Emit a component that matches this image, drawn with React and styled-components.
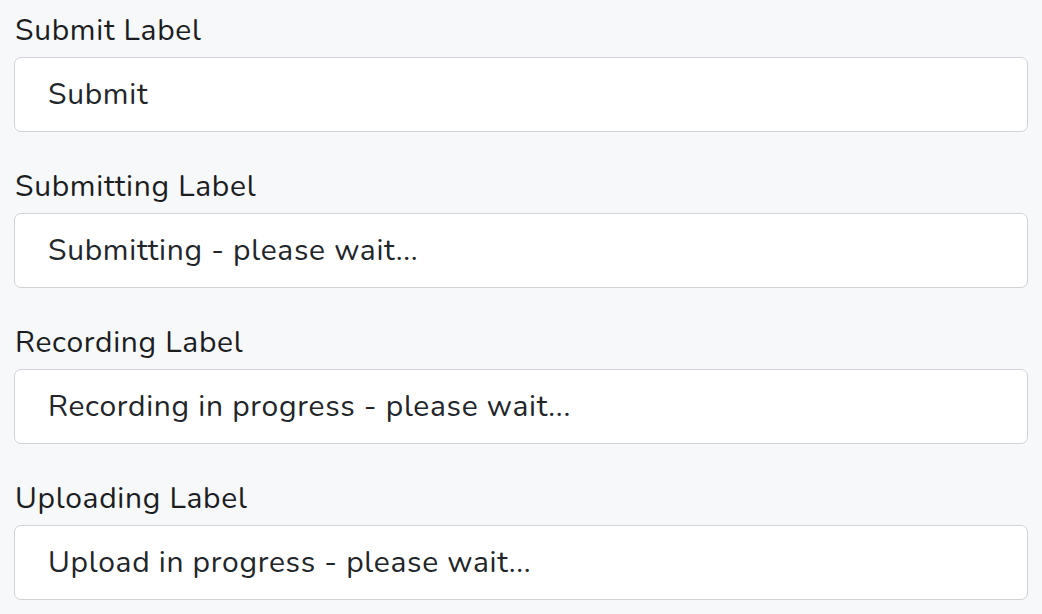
import React from "react";
import styled, { createGlobalStyle } from "styled-components";

const Global = createGlobalStyle`
  html, body { margin: 0; padding: 0; background: #f7f8fa; }
  body { font-family: "Nunito", "Lato", "Noto Sans", sans-serif; }
`;

const Form = styled.div`
  padding: 11px 14px 0 14px;
  display: flex;
  flex-direction: column;
  gap: 35px;
`;

const Group = styled.div`
  display: flex;
  flex-direction: column;
  gap: 6px;
`;

const Label = styled.label`
  font-size: 30px;
  line-height: 40px;
  height: 40px;
  letter-spacing: 0.7px;
  color: #1b1d1f;
  padding-left: 1px;
`;

const Input = styled.input`
  box-sizing: border-box;
  width: 100%;
  height: 75px;
  border: 1px solid #cfd2d6;
  border-radius: 7px;
  background: #ffffff;
  padding: 0 33px;
  font-family: inherit;
  font-size: 30px;
  letter-spacing: 0.7px;
  color: #222529;
  outline: none;
`;

const fields = [
  ["Submit Label", "Submit"],
  ["Submitting Label", "Submitting - please wait..."],
  ["Recording Label", "Recording in progress - please wait..."],
  ["Uploading Label", "Upload in progress - please wait..."],
];

export default function App() {
  return (
    <>
      <Global />
      <Form>
        {fields.map(([l, v]) => (
          <Group key={l}>
            <Label>{l}</Label>
            <Input defaultValue={v} readOnly />
          </Group>
        ))}
      </Form>
    </>
  );
}
